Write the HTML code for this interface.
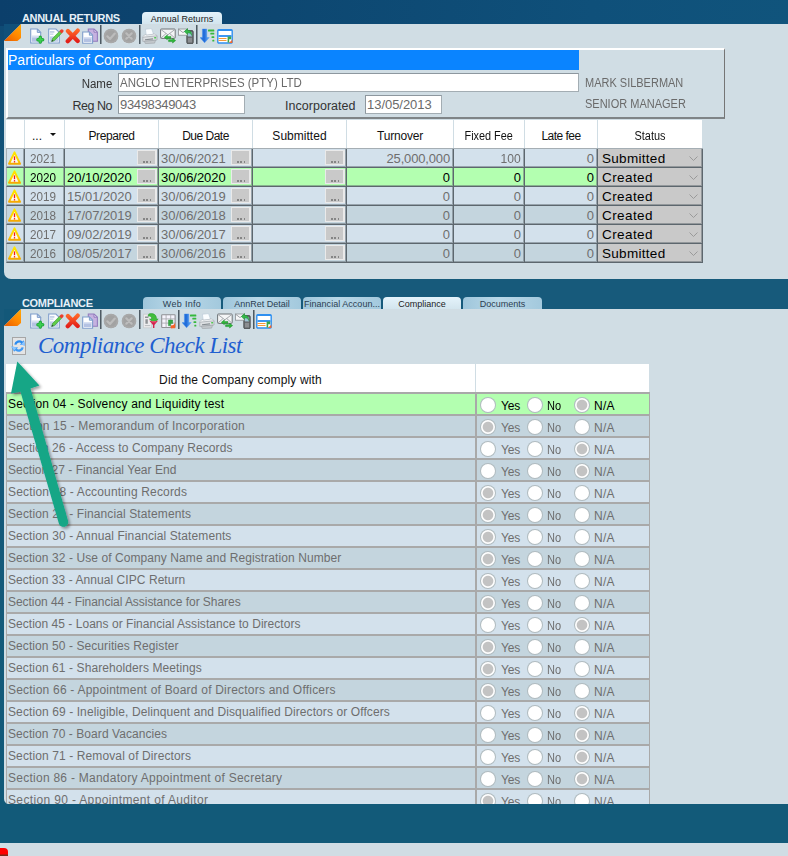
<!DOCTYPE html>
<html><head><meta charset="utf-8"><title>Annual Returns</title>
<style>
*{box-sizing:border-box;margin:0;padding:0}
html,body{width:788px;height:856px;overflow:hidden}
body{position:relative;font-family:"Liberation Sans",sans-serif;font-size:13px;color:#000;
  background:linear-gradient(180deg,#0c426e 0px,#0f4b75 24px,#14567b 200px,#175a7b 280px,#175a7b 310px,#125a79 800px,#115a78 856px)}
#hdr{position:absolute;left:0;top:0;width:788px;height:26px;background:linear-gradient(95deg,#0b3f6b 0%,#0d4771 35%,#0f507a 75%,#10547c 100%)}
.abs{position:absolute}
/* panels */
#p1{position:absolute;left:4px;top:24px;width:784px;height:255px;background:#d0dde4;border-bottom-left-radius:7px}
#p2{position:absolute;left:4px;top:309px;width:784px;height:495px;background:#d0dde4;border-bottom-left-radius:5px;overflow:hidden}
#foot{position:absolute;left:0;top:843px;width:788px;height:13px;background:#d0dde4}
#red{position:absolute;left:0;top:848px;width:8px;height:8px;background:linear-gradient(180deg,#f00 0,#f00 6px,#7a2a1a 7px);border-top-right-radius:4px}
.title{position:absolute;color:#e6f0f8;font-weight:bold;font-size:11px;white-space:nowrap;letter-spacing:-0.2px}
.tab{position:absolute;height:12px;border-radius:4px 4px 0 0;font-size:9px;line-height:14px;text-align:center;color:#2c3e50;white-space:nowrap;overflow:hidden;
  background:linear-gradient(90deg,#9fc6db,#b9d8e8 45%,#b4d4e5 60%,#a3c9dd)}
.tab.act{background:linear-gradient(180deg,#e4f3fb,#d3e5ee);color:#222}
.corner{position:absolute;width:17px;height:17px}
.tb{position:absolute;width:16px;height:16px}
.sep{position:absolute;width:2px;height:19px;background:linear-gradient(90deg,#4d5a63 0 1px,#8b979e 1px)}
/* group box */
#gb{position:absolute;left:6px;top:48px;width:719px;height:71px;border-top:2px solid #fff;border-left:2px solid #fff;border-right:1px solid #757575;border-bottom:2px solid #7f8487;}
#gbt{position:absolute;left:8px;top:50px;width:571px;height:20px;background:#0a84ff;color:#fff;font-size:14px;line-height:20px;padding-left:0;letter-spacing:-.05px;white-space:nowrap}
.lbl{position:absolute;font-size:12.5px;color:#333;white-space:nowrap;text-align:right}
.inp{position:absolute;background:#fff;border:1px solid #8d979e;border-right-color:#a3adb3;border-bottom-color:#a3adb3;font-size:13px;color:#6a6a6a;line-height:17px;padding-left:1px;white-space:nowrap;height:19px}
.who{position:absolute;font-size:12.5px;color:#6a6a6a;white-space:nowrap}
/* grid 1 */
#g1{position:absolute;left:0;top:0;width:788px;height:300px}
.h1{position:absolute;top:120px;height:28px;background:#fff;font-size:12px;line-height:33px;text-align:center;color:#111;white-space:nowrap}
.h1dots{position:absolute;left:32px;top:129px;font-size:12px;color:#111}
.h1arr{position:absolute;left:50px;top:133px;width:0;height:0;border-left:3px solid transparent;border-right:3px solid transparent;border-top:3px solid #111}
.r1{position:absolute;left:6px;width:696px;height:19px;background:#d3e1ec}
.r1.alt{background:#c4d5de}
.r1.sel{background:#b3ffb0}
.r1 .c{position:absolute;top:0;height:19px;border:0 solid #5d676e;border-width:0 1px 1px 0;box-shadow:inset -1px -1px 0 rgba(93,103,110,.5);padding-top:2px;font-size:13px;line-height:16px;color:#6e6e6e;white-space:nowrap;overflow:hidden}
.r1.sel .c{color:#000}
.c8{background:#c9c9c9;color:#000 !important;padding-left:4px;font-size:13.5px !important}
.c0{border-left:1px solid #a5aeb4 !important}
.c1{padding-left:5px}
.c2,.c3{padding-left:2px}
.num{text-align:right;padding-right:3px}
.warn{position:absolute;left:1px;top:2px;width:13px;height:14px}
.dd{position:absolute;right:1px;top:1px;width:20px;height:15px;background:#c9c9c9;border:1px solid #eaeaea;border-width:1px 2px 1px 1px;font-weight:normal;font-size:10px;line-height:12px;text-align:center;color:#777}
.chev{position:absolute;right:4px;top:7px;width:9px;height:5px}
/* grid 2 */
#cl{position:absolute;left:34px;top:22px;font-family:"Liberation Serif",serif;font-style:italic;font-size:23px;color:#1f5fd0;white-space:nowrap;line-height:30px}
#h2a{position:absolute;left:2px;top:55px;width:469px;height:29px;background:#fff;font-size:12px;line-height:32px;text-align:center;color:#111}
#h2b{position:absolute;left:472px;top:55px;width:173px;height:29px;background:#fff}
.r2{position:absolute;left:6px;width:644px;height:23px;background:#d3e1ec}
.r2.alt{background:#c4d5de}
.r2.sel{background:#b3ffb0}
.r2 .q{position:absolute;left:0;top:0;width:470px;height:23px;border:1px solid #a9a9a9;border-width:2px 1px 0 1px;font-size:12px;line-height:21px;padding-left:1px;color:#6e6e6e;white-space:nowrap;overflow:hidden}
.r2 .a{position:absolute;left:470px;top:0;width:174px;height:23px;border:1px solid #a9a9a9;border-width:2px 1px 0 1px;font-size:12px;color:#6e6e6e;white-space:nowrap}
.r2.sel .q,.r2.sel .a{color:#000}
.rd{position:absolute;top:3px;width:16px;height:16px;margin-left:-.5px;border-radius:50%;background:#fff;border:1px solid rgba(70,95,105,.42)}
.rd.on{background:radial-gradient(circle,#c3c3c3 0,#c3c3c3 4.800px,#fff 5.800px)}
.r2 .a > span{position:absolute;top:4px;line-height:16px}
.ly{left:24px}.ln{left:70px}.la{left:117px}

.dd u{position:absolute;left:5px;bottom:1px;width:9px;height:2px;background:linear-gradient(90deg,#858585 0 1.600px,transparent 1.600px 3.300px,#858585 3.300px 4.900px,transparent 4.900px 6.600px,#858585 6.600px 8.200px,transparent 8.200px)}

#g2{position:absolute;left:-4px;top:-309px;width:788px;height:856px}

#g1top{position:absolute;left:6px;top:148px;width:697px;height:1px;background:#a5aeb4}

</style></head>
<body>
<svg width="0" height="0" style="position:absolute"><defs>
<symbol id="i-warn" viewBox="0 0 14 14" preserveAspectRatio="none"><defs><linearGradient id="gw" x1="0" y1="0" x2="0" y2="1"><stop offset="0" stop-color="#ffe600"/><stop offset=".7" stop-color="#ffd000"/><stop offset="1" stop-color="#f5a800"/></linearGradient></defs><path d="M7 1.400L12.900 12.800H1.100Z" fill="#fdfbf0" stroke="url(#gw)" stroke-width="2.100" stroke-linejoin="round"/><rect x="6.300" y="5.400" width="1.400" height="3.800" fill="#f01818"/><rect x="6.300" y="10.100" width="1.400" height="1.400" fill="#f01818"/></symbol>
<symbol id="i-new" viewBox="0 0 16 16"><path d="M.7 1h6.600l3.400 3.400v10.600h-10z" fill="#fdfeff" stroke="#7f9dcb" stroke-width="1.100"/><path d="M7.300 1v3.400h3.400z" fill="#c9d8ef" stroke="#7f9dcb" stroke-linejoin="round"/><rect x="1.900" y="7.800" width="7.600" height="6" fill="#b4c2e3"/><rect x="1.900" y="7.800" width="7.600" height="1.800" fill="#d8e0f2"/><path d="M10.300 9.300v4.800M7.900 11.700h4.800" stroke="#23a83a" stroke-width="3.400" stroke-linecap="round"/><path d="M10.300 9.600v4.200M8.200 11.700h4.200" stroke="#3ccf52" stroke-width="1.800" stroke-linecap="round"/></symbol>
<symbol id="i-edit" viewBox="0 0 16 16"><path d="M.7 1h7.200l3.400 3.400v10.600h-10.600z" fill="#fdfeff" stroke="#7f9dcb" stroke-width="1.100"/><rect x="1.900" y="8.400" width="8.200" height="5.400" fill="#c0cde9"/><rect x="2" y="3.400" width="4.400" height="1.100" fill="#9fb4d8"/><rect x="2" y="5.600" width="3.400" height="1" fill="#b7c7e2"/><path d="M3.600 13.600l.9-3 6.900-7.200 2 2-6.900 7.200z" fill="#62cc48" stroke="#2f9a35" stroke-width=".6"/><path d="M11.300 3.200l1.300-1.400a1.600 1.600 0 0 1 2.400 2.400l-1.300 1.400z" fill="#ea3f2c"/><path d="M3.600 13.600l.6-1.900 1.300 1.300z" fill="#333"/></symbol>
<symbol id="i-del" viewBox="0 0 16 16"><defs><linearGradient id="gx" x1="0" y1="0" x2="0" y2="1"><stop offset="0" stop-color="#ff6426"/><stop offset="1" stop-color="#e3201a"/></linearGradient></defs><path d="M2.900 3l9.800 10M12.700 2.600l-10 10.600" stroke="url(#gx)" stroke-width="4.200" stroke-linecap="round" fill="none"/></symbol>
<symbol id="i-copy" viewBox="0 0 16 16"><path d="M6.300 1h5.700l3.400 3.200v9h-9.100z" fill="#c6b2e0" stroke="#927cbd" stroke-width="1.100"/><path d="M12 1v3.200h3.400z" fill="#e6dcf3" stroke="#927cbd" stroke-linejoin="round"/><path d="M.7 4h6.700l3.200 3.200v8h-9.900z" fill="#fdfeff" stroke="#7f9dcb" stroke-width="1.100"/><path d="M7.400 4v3.200h3.200z" fill="#c9d8ef" stroke="#7f9dcb" stroke-linejoin="round"/><rect x="1.900" y="9" width="7.600" height="5" fill="#b4c2e3"/><rect x="1.900" y="9" width="7.600" height="1.600" fill="#d8e0f2"/></symbol>
<symbol id="i-ok" viewBox="0 0 16 16"><circle cx="8" cy="8" r="7.300" fill="#a2a2a2"/><circle cx="8" cy="8" r="6.300" fill="none" stroke="#adadad" stroke-width="1"/><path d="M4.300 8.300l2.700 2.700 4.800-5.400" fill="none" stroke="#bcbcbc" stroke-width="2.200" stroke-linecap="round" stroke-linejoin="round"/></symbol>
<symbol id="i-no" viewBox="0 0 16 16"><circle cx="8" cy="8" r="7.300" fill="#a2a2a2"/><circle cx="8" cy="8" r="6.300" fill="none" stroke="#adadad" stroke-width="1"/><path d="M5.300 5.300l5.400 5.400M10.700 5.300l-5.400 5.400" fill="none" stroke="#bcbcbc" stroke-width="2.200" stroke-linecap="round"/></symbol>
<symbol id="i-print" viewBox="0 0 16 16"><path d="M3.400 1.200l6.200-.6 2 5.600-7.400 1z" fill="#fafdff" stroke="#bccbd8" stroke-width=".7"/><path d="M.8 8.200l3.200-2 .4 1 7.200-1-.2-.8 3.600 2v1.200l-14.200 1.200z" fill="#f0f2f4" stroke="#b0b6bb" stroke-width=".5"/><path d="M.8 9.200l14.200-1.400v4.200l-14.200 1.400z" fill="#dde0e3" stroke="#a2a8ad" stroke-width=".7" stroke-linejoin="round"/><path d="M2.400 13.300l11.200-1.100-1 2.900-9.200.5z" fill="#c3c8cc" stroke="#9aa0a5" stroke-width=".6"/><path d="M3 11.700l8-.8" stroke="#858c91" stroke-width="1.100"/><rect x="12.200" y="9.200" width="1.900" height="1.200" fill="#30c530"/></symbol>
<symbol id="i-mail" viewBox="0 0 16 16"><rect x=".6" y="1" width="14.600" height="9.400" rx=".8" fill="#f4f5f6" stroke="#6f7478" stroke-width="1"/><path d="M.8 1.400l7.100 5.400 7.100-5.400M.8 10.200l5.200-4.600M15 10.200l-5.200-4.600" fill="none" stroke="#9da2a6" stroke-width=".9"/><path d="M4.300 9.300l3-2.300v1.400h3.600v1.900h-3.600v1.400z" fill="#2fb93a" stroke="#158a22" stroke-width=".5"/><path d="M15.600 12.600l-3-2.300v1.400h-4v1.900h4v1.400z" fill="#2fb93a" stroke="#158a22" stroke-width=".5"/></symbol>
<symbol id="i-sms" viewBox="0 0 16 16"><rect x="8.800" y="2.600" width="6.400" height="13" rx="1.200" fill="#6a6d70" stroke="#3e4144" stroke-width=".8"/><rect x="9.900" y="4.200" width="4.200" height="4.200" fill="#9fc3d8"/><rect x="9.900" y="10" width="4.200" height="4.400" fill="#8b8e91"/><rect x=".5" y="1" width="9" height="6.200" fill="#f6f7f8" stroke="#8a8f93" stroke-width=".8"/><path d="M.6 1.200l4.400 3.400 4.400-3.400" fill="none" stroke="#8a8f93" stroke-width=".8"/><path d="M6.300 3.600l3.200-3v1.700c3 0 4.400 1.800 4.200 5.200-.6-2-1.800-2.700-4.200-2.700v1.800z" fill="#33b94a" stroke="#1c8f31" stroke-width=".5" stroke-linejoin="round"/></symbol>
<symbol id="i-down" viewBox="0 0 16 16"><defs><linearGradient id="gd" x1="0" y1="0" x2="1" y2="0"><stop offset="0" stop-color="#2f7fe6"/><stop offset=".45" stop-color="#1f6ad8"/><stop offset="1" stop-color="#6db6fb"/></linearGradient></defs><path d="M2.400 1h4.400v8.600h2.400l-4.600 5.200-4.600-5.200h2.400z" fill="url(#gd)" stroke="#3b8cf0" stroke-width=".4"/><rect x="8" y="1.600" width="6.300" height="1.900" rx=".5" fill="#36b93c"/><rect x="10.300" y="4.700" width="4" height="1.900" rx=".5" fill="#36b93c"/><rect x="11.500" y="8.200" width="2.800" height="1.900" rx=".5" fill="#36b93c"/><rect x="12.300" y="11.700" width="2" height="1.900" rx=".5" fill="#36b93c"/></symbol>
<symbol id="i-win" viewBox="0 0 16 16"><rect x=".8" y="1.600" width="14.400" height="13.400" rx="1" fill="#fff" stroke="#2f8ff0" stroke-width="1.400"/><rect x="1" y="1.600" width="14" height="1.400" fill="#2f8ff0"/><rect x="1.500" y="7" width="13" height="2" fill="#3e97f2"/><rect x="1.500" y="10" width="8" height="1" fill="#f59a3a"/><rect x="1.500" y="12" width="8" height="1" fill="#f59a3a"/><path d="M10.600 8.400h3.600v2.800h-2v3.200h-1.600z" fill="#3aa64a"/><path d="M12 15l3.400-3.600v3.600z" fill="#f26a30"/></symbol>
<symbol id="i-imp" viewBox="0 0 16 16"><path d="M.4 1.200h6.600l1.600 1.600v12h-8.200z" fill="#ececee" stroke="#c4c6c9" stroke-width=".7"/><path d="M2 3.600h3.400v1.400h-3.400zM2.400 6.200h2.400v4.600h-2.400z" fill="#8f9295"/><path d="M1.800 12.600h5.400" stroke="#b9bbbe" stroke-width="1"/><path d="M5.800 1c4.600-1.400 8 1 7.600 5h1.800l-4.400 4-4.400-4h2.200c.2-2-1-3.200-3.600-2.800z" fill="#41bd3c" stroke="#1f9629" stroke-width=".5" stroke-linejoin="round"/><path d="M6.200 7.400c1.600 1 7.400 1 9 0l-3.800 4.600v3h-1.400v-3z" fill="#d3224c"/><path d="M8.400 8.800h4.800" stroke="#ee6a88" stroke-width=".9"/></symbol>
<symbol id="i-grid" viewBox="0 0 16 16"><rect x=".7" y="1.700" width="13.400" height="12.800" rx=".6" fill="#f6f4fd" stroke="#8f9094" stroke-width="1.100"/><path d="M.7 5.900h13.400M.7 10.100h13.400M5.100 1.700v12.800M9.700 1.700v12.800" stroke="#a3a4aa" stroke-width=".8" fill="none"/><path d="M7.400 7h4.400v3.400h-2.200v2.400h-2.200z" fill="#35a845" stroke="#228a32" stroke-width=".4"/><path d="M9.800 15.200c3 0 4.600-2 4.400-6-.6 2.200-2 3.200-4.400 3.200z" fill="#f46428"/><path d="M10 15.200h4.200v-4z" fill="#f46428"/></symbol>
<symbol id="i-ref" viewBox="0 0 18 20"><rect x="2.500" y="1.500" width="13" height="17" fill="#e3e4e5" stroke="#a6a6a6"/><path d="M4.200 8.400a5 5 0 0 1 8.400-2.800l1.300-1.400 1 5.200-5-.8 1.300-1.400a3 3 0 0 0-4.800 1.600z" fill="#2b8cf0"/><path d="M13.800 11.600a5 5 0 0 1-8.400 2.800l-1.300 1.400-2.800-5.400 6.800 1-1.300 1.400a3 3 0 0 0 4.800-1.600z" fill="#3f9af5"/><path d="M10.900 8.600l4 .7-.8-4.200z" fill="#8cc6ff"/><path d="M1.600 10.600l5.400.8-3 3.200z" fill="#8cc6ff"/></symbol>
</defs></svg>
<div id="hdr"></div><div id="p1"></div>
<div class="title" style="left:22px;top:12px"><span style="letter-spacing:-0.33px">ANNUAL RETURNS</span></div>
<div class="tab act" style="left:142px;top:12px;width:80px"><span style="letter-spacing:0.04px">Annual Returns</span></div>
<svg class="corner" style="left:4px;top:24px" viewBox="0 0 17 17"><defs><linearGradient id="gc1" x1="1" y1="0" x2=".2" y2="1"><stop offset="0" stop-color="#ffaa08"/><stop offset=".55" stop-color="#ff8800"/><stop offset="1" stop-color="#ec6200"/></linearGradient></defs><path d="M0 0H17L0 17Z" fill="#10507a"/><path d="M17 0V14L13.400 17H0Z" fill="url(#gc1)"/></svg>
<div id="gb"></div>
<div id="gbt"><span style="letter-spacing:0.02px">Particulars of Company</span></div>
<div class="lbl" style="left:40px;width:72px;top:77px"><span style="display:inline-block;transform:scaleX(0.92);transform-origin:right center">Name</span></div>
<div class="lbl" style="left:40px;width:72px;top:99px"><span style="letter-spacing:-0.49px">Reg No</span></div>
<div class="inp" style="left:118px;top:73px;width:461px"><span style="display:inline-block;transform:scaleX(0.8843);transform-origin:left center">ANGLO ENTERPRISES (PTY) LTD</span></div>
<div class="inp" style="left:118px;top:95px;width:127px"><span style="letter-spacing:-0.34px">93498349043</span></div>
<div class="lbl" style="left:270px;width:85.500px;top:99px"><span style="letter-spacing:0.02px">Incorporated</span></div>
<div class="inp" style="left:365px;top:95px;width:77px"><span style="letter-spacing:-0.04px">13/05/2013</span></div>
<div class="who" style="left:585px;top:76px"><span style="display:inline-block;transform:scaleX(0.8791);transform-origin:left center">MARK SILBERMAN</span></div>
<div class="who" style="left:585px;top:97px"><span style="display:inline-block;transform:scaleX(0.8798);transform-origin:left center">SENIOR MANAGER</span></div>
<div id="g1">
<div class="h1" style="left:6px;width:18px"></div>
<div class="h1" style="left:25px;width:39px"></div>
<div class="h1" style="left:65px;width:93px"><span style="letter-spacing:-0.43px">Prepared</span></div>
<div class="h1" style="left:159px;width:93px"><span style="letter-spacing:-0.5px">Due Date</span></div>
<div class="h1" style="left:253px;width:93px"><span style="letter-spacing:0.03px">Submitted</span></div>
<div class="h1" style="left:347px;width:106px"><span style="letter-spacing:-0.2px">Turnover</span></div>
<div class="h1" style="left:454px;width:70px"><span style="display:inline-block;transform:scaleX(0.9072);transform-origin:center center">Fixed Fee</span></div>
<div class="h1" style="left:525px;width:72px"><span style="letter-spacing:-0.54px">Late fee</span></div>
<div class="h1" style="left:598px;width:104px"><span style="display:inline-block;transform:scaleX(0.9112);transform-origin:center center">Status</span></div>
<div class="h1dots">...</div><div class="h1arr"></div><div id="g1top"></div>
<div class="r1" style="top:149px"><div class="c c0" style="left:0px;width:19px"><svg class="warn" viewBox="0 0 14 14" preserveAspectRatio="none"><use href="#i-warn"/></svg></div><div class="c c1" style="left:19px;width:40px"><span style="display:inline-block;transform:scaleX(0.8993);transform-origin:left center">2021</span></div><div class="c c2" style="left:59px;width:94px"><span style="letter-spacing:-0.04px"></span><b class="dd"><u></u></b></div><div class="c c3" style="left:153px;width:94px"><span style="letter-spacing:-0.04px">30/06/2021</span><b class="dd"><u></u></b></div><div class="c c4" style="left:247px;width:94px"><b class="dd"><u></u></b></div><div class="c c5 num" style="left:341px;width:107px"><span style="letter-spacing:-0.16px">25,000,000</span></div><div class="c c6 num" style="left:448px;width:71px"><span style="display:inline-block;transform:scaleX(0.932);transform-origin:right center">100</span></div><div class="c c7 num" style="left:519px;width:73px">0</div><div class="c c8" style="left:592px;width:105px"><span style="letter-spacing:0.3px">Submitted</span><svg class="chev" viewBox="0 0 9 5"><path d="M.5 .5l4 4 4-4" fill="none" stroke="#9a9a9a" stroke-width="1"/></svg></div></div>
<div class="r1 sel" style="top:168px"><div class="c c0" style="left:0px;width:19px"><svg class="warn" viewBox="0 0 14 14" preserveAspectRatio="none"><use href="#i-warn"/></svg></div><div class="c c1" style="left:19px;width:40px"><span style="display:inline-block;transform:scaleX(0.8993);transform-origin:left center">2020</span></div><div class="c c2" style="left:59px;width:94px"><span style="letter-spacing:-0.04px">20/10/2020</span><b class="dd"><u></u></b></div><div class="c c3" style="left:153px;width:94px"><span style="letter-spacing:-0.04px">30/06/2020</span><b class="dd"><u></u></b></div><div class="c c4" style="left:247px;width:94px"><b class="dd"><u></u></b></div><div class="c c5 num" style="left:341px;width:107px">0</div><div class="c c6 num" style="left:448px;width:71px">0</div><div class="c c7 num" style="left:519px;width:73px">0</div><div class="c c8" style="left:592px;width:105px"><span style="letter-spacing:0.41px">Created</span><svg class="chev" viewBox="0 0 9 5"><path d="M.5 .5l4 4 4-4" fill="none" stroke="#9a9a9a" stroke-width="1"/></svg></div></div>
<div class="r1" style="top:187px"><div class="c c0" style="left:0px;width:19px"><svg class="warn" viewBox="0 0 14 14" preserveAspectRatio="none"><use href="#i-warn"/></svg></div><div class="c c1" style="left:19px;width:40px"><span style="display:inline-block;transform:scaleX(0.8993);transform-origin:left center">2019</span></div><div class="c c2" style="left:59px;width:94px"><span style="letter-spacing:-0.04px">15/01/2020</span><b class="dd"><u></u></b></div><div class="c c3" style="left:153px;width:94px"><span style="letter-spacing:-0.04px">30/06/2019</span><b class="dd"><u></u></b></div><div class="c c4" style="left:247px;width:94px"><b class="dd"><u></u></b></div><div class="c c5 num" style="left:341px;width:107px">0</div><div class="c c6 num" style="left:448px;width:71px">0</div><div class="c c7 num" style="left:519px;width:73px">0</div><div class="c c8" style="left:592px;width:105px"><span style="letter-spacing:0.41px">Created</span><svg class="chev" viewBox="0 0 9 5"><path d="M.5 .5l4 4 4-4" fill="none" stroke="#9a9a9a" stroke-width="1"/></svg></div></div>
<div class="r1 alt" style="top:206px"><div class="c c0" style="left:0px;width:19px"><svg class="warn" viewBox="0 0 14 14" preserveAspectRatio="none"><use href="#i-warn"/></svg></div><div class="c c1" style="left:19px;width:40px"><span style="display:inline-block;transform:scaleX(0.8993);transform-origin:left center">2018</span></div><div class="c c2" style="left:59px;width:94px"><span style="letter-spacing:-0.04px">17/07/2019</span><b class="dd"><u></u></b></div><div class="c c3" style="left:153px;width:94px"><span style="letter-spacing:-0.04px">30/06/2018</span><b class="dd"><u></u></b></div><div class="c c4" style="left:247px;width:94px"><b class="dd"><u></u></b></div><div class="c c5 num" style="left:341px;width:107px">0</div><div class="c c6 num" style="left:448px;width:71px">0</div><div class="c c7 num" style="left:519px;width:73px">0</div><div class="c c8" style="left:592px;width:105px"><span style="letter-spacing:0.41px">Created</span><svg class="chev" viewBox="0 0 9 5"><path d="M.5 .5l4 4 4-4" fill="none" stroke="#9a9a9a" stroke-width="1"/></svg></div></div>
<div class="r1" style="top:225px"><div class="c c0" style="left:0px;width:19px"><svg class="warn" viewBox="0 0 14 14" preserveAspectRatio="none"><use href="#i-warn"/></svg></div><div class="c c1" style="left:19px;width:40px"><span style="display:inline-block;transform:scaleX(0.8993);transform-origin:left center">2017</span></div><div class="c c2" style="left:59px;width:94px"><span style="letter-spacing:-0.04px">09/02/2019</span><b class="dd"><u></u></b></div><div class="c c3" style="left:153px;width:94px"><span style="letter-spacing:-0.04px">30/06/2017</span><b class="dd"><u></u></b></div><div class="c c4" style="left:247px;width:94px"><b class="dd"><u></u></b></div><div class="c c5 num" style="left:341px;width:107px">0</div><div class="c c6 num" style="left:448px;width:71px">0</div><div class="c c7 num" style="left:519px;width:73px">0</div><div class="c c8" style="left:592px;width:105px"><span style="letter-spacing:0.41px">Created</span><svg class="chev" viewBox="0 0 9 5"><path d="M.5 .5l4 4 4-4" fill="none" stroke="#9a9a9a" stroke-width="1"/></svg></div></div>
<div class="r1 alt" style="top:244px"><div class="c c0" style="left:0px;width:19px"><svg class="warn" viewBox="0 0 14 14" preserveAspectRatio="none"><use href="#i-warn"/></svg></div><div class="c c1" style="left:19px;width:40px"><span style="display:inline-block;transform:scaleX(0.8993);transform-origin:left center">2016</span></div><div class="c c2" style="left:59px;width:94px"><span style="letter-spacing:-0.04px">08/05/2017</span><b class="dd"><u></u></b></div><div class="c c3" style="left:153px;width:94px"><span style="letter-spacing:-0.04px">30/06/2016</span><b class="dd"><u></u></b></div><div class="c c4" style="left:247px;width:94px"><b class="dd"><u></u></b></div><div class="c c5 num" style="left:341px;width:107px">0</div><div class="c c6 num" style="left:448px;width:71px">0</div><div class="c c7 num" style="left:519px;width:73px">0</div><div class="c c8" style="left:592px;width:105px"><span style="letter-spacing:0.3px">Submitted</span><svg class="chev" viewBox="0 0 9 5"><path d="M.5 .5l4 4 4-4" fill="none" stroke="#9a9a9a" stroke-width="1"/></svg></div></div>
</div>
<div id="p2">
 <div id="cl"><span style="letter-spacing:-0.51px">Compliance Check List</span></div>
 <div id="h2a"><span style="letter-spacing:0.15px">Did the Company comply with</span></div><div id="h2b"></div>
<div id="g2">
<div class="r2 sel" style="top:392px"><div class="q"><span style="letter-spacing:0.17px">Section 04 - Solvency and Liquidity test</span></div><div class="a"><i class="rd" style="left:3px"></i><span class="ly"><span style="letter-spacing:-0.14px">Yes</span></span><i class="rd" style="left:50px"></i><span class="ln"><span style="display:inline-block;transform:scaleX(0.919);transform-origin:left center">No</span></span><i class="rd on" style="left:97px"></i><span class="la"><span style="letter-spacing:0.25px">N/A</span></span></div></div>
<div class="r2 alt" style="top:414px"><div class="q"><span style="letter-spacing:0.22px">Section 15 - Memorandum of Incorporation</span></div><div class="a"><i class="rd on" style="left:3px"></i><span class="ly"><span style="letter-spacing:-0.14px">Yes</span></span><i class="rd" style="left:50px"></i><span class="ln"><span style="display:inline-block;transform:scaleX(0.919);transform-origin:left center">No</span></span><i class="rd" style="left:97px"></i><span class="la"><span style="letter-spacing:0.25px">N/A</span></span></div></div>
<div class="r2" style="top:436px"><div class="q"><span style="letter-spacing:0.08px">Section 26 - Access to Company Records</span></div><div class="a"><i class="rd" style="left:3px"></i><span class="ly"><span style="letter-spacing:-0.14px">Yes</span></span><i class="rd" style="left:50px"></i><span class="ln"><span style="display:inline-block;transform:scaleX(0.919);transform-origin:left center">No</span></span><i class="rd on" style="left:97px"></i><span class="la"><span style="letter-spacing:0.25px">N/A</span></span></div></div>
<div class="r2 alt" style="top:458px"><div class="q"><span style="letter-spacing:0.03px">Section 27 - Financial Year End</span></div><div class="a"><i class="rd" style="left:3px"></i><span class="ly"><span style="letter-spacing:-0.14px">Yes</span></span><i class="rd" style="left:50px"></i><span class="ln"><span style="display:inline-block;transform:scaleX(0.919);transform-origin:left center">No</span></span><i class="rd on" style="left:97px"></i><span class="la"><span style="letter-spacing:0.25px">N/A</span></span></div></div>
<div class="r2" style="top:480px"><div class="q"><span style="letter-spacing:0.16px">Section 28 - Accounting Records</span></div><div class="a"><i class="rd on" style="left:3px"></i><span class="ly"><span style="letter-spacing:-0.14px">Yes</span></span><i class="rd" style="left:50px"></i><span class="ln"><span style="display:inline-block;transform:scaleX(0.919);transform-origin:left center">No</span></span><i class="rd" style="left:97px"></i><span class="la"><span style="letter-spacing:0.25px">N/A</span></span></div></div>
<div class="r2 alt" style="top:502px"><div class="q"><span style="letter-spacing:0.11px">Section 29 - Financial Statements</span></div><div class="a"><i class="rd on" style="left:3px"></i><span class="ly"><span style="letter-spacing:-0.14px">Yes</span></span><i class="rd" style="left:50px"></i><span class="ln"><span style="display:inline-block;transform:scaleX(0.919);transform-origin:left center">No</span></span><i class="rd" style="left:97px"></i><span class="la"><span style="letter-spacing:0.25px">N/A</span></span></div></div>
<div class="r2" style="top:524px"><div class="q"><span style="letter-spacing:0.1px">Section 30 - Annual Financial Statements</span></div><div class="a"><i class="rd on" style="left:3px"></i><span class="ly"><span style="letter-spacing:-0.14px">Yes</span></span><i class="rd" style="left:50px"></i><span class="ln"><span style="display:inline-block;transform:scaleX(0.919);transform-origin:left center">No</span></span><i class="rd" style="left:97px"></i><span class="la"><span style="letter-spacing:0.25px">N/A</span></span></div></div>
<div class="r2 alt" style="top:546px"><div class="q"><span style="letter-spacing:0.08px">Section 32 - Use of Company Name and Registration Number</span></div><div class="a"><i class="rd on" style="left:3px"></i><span class="ly"><span style="letter-spacing:-0.14px">Yes</span></span><i class="rd" style="left:50px"></i><span class="ln"><span style="display:inline-block;transform:scaleX(0.919);transform-origin:left center">No</span></span><i class="rd" style="left:97px"></i><span class="la"><span style="letter-spacing:0.25px">N/A</span></span></div></div>
<div class="r2" style="top:568px"><div class="q"><span style="letter-spacing:0.06px">Section 33 - Annual CIPC Return</span></div><div class="a"><i class="rd on" style="left:3px"></i><span class="ly"><span style="letter-spacing:-0.14px">Yes</span></span><i class="rd" style="left:50px"></i><span class="ln"><span style="display:inline-block;transform:scaleX(0.919);transform-origin:left center">No</span></span><i class="rd" style="left:97px"></i><span class="la"><span style="letter-spacing:0.25px">N/A</span></span></div></div>
<div class="r2 alt" style="top:590px"><div class="q"><span style="letter-spacing:-0.05px">Section 44 - Financial Assistance for Shares</span></div><div class="a"><i class="rd on" style="left:3px"></i><span class="ly"><span style="letter-spacing:-0.14px">Yes</span></span><i class="rd" style="left:50px"></i><span class="ln"><span style="display:inline-block;transform:scaleX(0.919);transform-origin:left center">No</span></span><i class="rd" style="left:97px"></i><span class="la"><span style="letter-spacing:0.25px">N/A</span></span></div></div>
<div class="r2" style="top:612px"><div class="q"><span style="letter-spacing:0.03px">Section 45 - Loans or Financial Assistance to Directors</span></div><div class="a"><i class="rd" style="left:3px"></i><span class="ly"><span style="letter-spacing:-0.14px">Yes</span></span><i class="rd" style="left:50px"></i><span class="ln"><span style="display:inline-block;transform:scaleX(0.919);transform-origin:left center">No</span></span><i class="rd on" style="left:97px"></i><span class="la"><span style="letter-spacing:0.25px">N/A</span></span></div></div>
<div class="r2 alt" style="top:634px"><div class="q"><span style="letter-spacing:0.08px">Section 50 - Securities Register</span></div><div class="a"><i class="rd on" style="left:3px"></i><span class="ly"><span style="letter-spacing:-0.14px">Yes</span></span><i class="rd" style="left:50px"></i><span class="ln"><span style="display:inline-block;transform:scaleX(0.919);transform-origin:left center">No</span></span><i class="rd" style="left:97px"></i><span class="la"><span style="letter-spacing:0.25px">N/A</span></span></div></div>
<div class="r2" style="top:656px"><div class="q"><span style="letter-spacing:0.09px">Section 61 - Shareholders Meetings</span></div><div class="a"><i class="rd on" style="left:3px"></i><span class="ly"><span style="letter-spacing:-0.14px">Yes</span></span><i class="rd" style="left:50px"></i><span class="ln"><span style="display:inline-block;transform:scaleX(0.919);transform-origin:left center">No</span></span><i class="rd" style="left:97px"></i><span class="la"><span style="letter-spacing:0.25px">N/A</span></span></div></div>
<div class="r2 alt" style="top:678px"><div class="q"><span style="letter-spacing:0.21px">Section 66 - Appointment of Board of Directors and Officers</span></div><div class="a"><i class="rd on" style="left:3px"></i><span class="ly"><span style="letter-spacing:-0.14px">Yes</span></span><i class="rd" style="left:50px"></i><span class="ln"><span style="display:inline-block;transform:scaleX(0.919);transform-origin:left center">No</span></span><i class="rd" style="left:97px"></i><span class="la"><span style="letter-spacing:0.25px">N/A</span></span></div></div>
<div class="r2" style="top:700px"><div class="q"><span style="letter-spacing:0.1px">Section 69 - Ineligible, Delinquent and Disqualified Directors or Offcers</span></div><div class="a"><i class="rd" style="left:3px"></i><span class="ly"><span style="letter-spacing:-0.14px">Yes</span></span><i class="rd" style="left:50px"></i><span class="ln"><span style="display:inline-block;transform:scaleX(0.919);transform-origin:left center">No</span></span><i class="rd on" style="left:97px"></i><span class="la"><span style="letter-spacing:0.25px">N/A</span></span></div></div>
<div class="r2 alt" style="top:722px"><div class="q"><span style="letter-spacing:0.07px">Section 70 - Board Vacancies</span></div><div class="a"><i class="rd" style="left:3px"></i><span class="ly"><span style="letter-spacing:-0.14px">Yes</span></span><i class="rd" style="left:50px"></i><span class="ln"><span style="display:inline-block;transform:scaleX(0.919);transform-origin:left center">No</span></span><i class="rd on" style="left:97px"></i><span class="la"><span style="letter-spacing:0.25px">N/A</span></span></div></div>
<div class="r2" style="top:744px"><div class="q"><span style="letter-spacing:0.11px">Section 71 - Removal of Directors</span></div><div class="a"><i class="rd" style="left:3px"></i><span class="ly"><span style="letter-spacing:-0.14px">Yes</span></span><i class="rd" style="left:50px"></i><span class="ln"><span style="display:inline-block;transform:scaleX(0.919);transform-origin:left center">No</span></span><i class="rd on" style="left:97px"></i><span class="la"><span style="letter-spacing:0.25px">N/A</span></span></div></div>
<div class="r2 alt" style="top:766px"><div class="q"><span style="letter-spacing:0.26px">Section 86 - Mandatory Appointment of Secretary</span></div><div class="a"><i class="rd" style="left:3px"></i><span class="ly"><span style="letter-spacing:-0.14px">Yes</span></span><i class="rd" style="left:50px"></i><span class="ln"><span style="display:inline-block;transform:scaleX(0.919);transform-origin:left center">No</span></span><i class="rd on" style="left:97px"></i><span class="la"><span style="letter-spacing:0.25px">N/A</span></span></div></div>
<div class="r2" style="top:788px"><div class="q"><span style="letter-spacing:0.35px">Section 90 - Appointment of Auditor</span></div><div class="a"><i class="rd on" style="left:3px"></i><span class="ly"><span style="letter-spacing:-0.14px">Yes</span></span><i class="rd" style="left:50px"></i><span class="ln"><span style="display:inline-block;transform:scaleX(0.919);transform-origin:left center">No</span></span><i class="rd" style="left:97px"></i><span class="la"><span style="letter-spacing:0.25px">N/A</span></span></div></div>
</div>
</div>
<div class="title" style="left:22px;top:297px"><span style="letter-spacing:-0.33px">COMPLIANCE</span></div>
<div class="tab" style="left:143px;top:297px;width:78px"><span style="letter-spacing:0.31px">Web Info</span></div>
<div class="tab" style="left:223px;top:297px;width:78px">AnnRet Detail</div>
<div class="tab" style="left:303px;top:297px;width:78px"><span style="letter-spacing:0.03px">Financial Accoun...</span></div>
<div class="tab act" style="left:383px;top:297px;width:78px">Compliance</div>
<div class="tab" style="left:463px;top:297px;width:79px">Documents</div>
<svg class="corner" style="left:4px;top:309px" viewBox="0 0 17 17"><defs><linearGradient id="gc2" x1="1" y1="0" x2=".2" y2="1"><stop offset="0" stop-color="#ffaa08"/><stop offset=".55" stop-color="#ff8800"/><stop offset="1" stop-color="#ec6200"/></linearGradient></defs><path d="M0 0H17L0 17Z" fill="#135879"/><path d="M17 0V14L13.400 17H0Z" fill="url(#gc2)"/></svg>
<svg class="tb" style="left:30px;top:28px" viewBox="0 0 16 16"><use href="#i-new"/></svg>
<svg class="tb" style="left:48px;top:28px" viewBox="0 0 16 16"><use href="#i-edit"/></svg>
<svg class="tb" style="left:65px;top:28px" viewBox="0 0 16 16"><use href="#i-del"/></svg>
<svg class="tb" style="left:82px;top:28px" viewBox="0 0 16 16"><use href="#i-copy"/></svg>
<div class="sep" style="left:100px;top:25px"></div>
<svg class="tb" style="left:103px;top:28px" viewBox="0 0 16 16"><use href="#i-ok"/></svg>
<svg class="tb" style="left:121px;top:28px" viewBox="0 0 16 16"><use href="#i-no"/></svg>
<div class="sep" style="left:139px;top:25px"></div>
<svg class="tb" style="left:142px;top:28px" viewBox="0 0 16 16"><use href="#i-print"/></svg>
<svg class="tb" style="left:160px;top:28px" viewBox="0 0 16 16"><use href="#i-mail"/></svg>
<svg class="tb" style="left:178px;top:28px" viewBox="0 0 16 16"><use href="#i-sms"/></svg>
<div class="sep" style="left:196px;top:25px"></div>
<svg class="tb" style="left:200px;top:28px" viewBox="0 0 16 16"><use href="#i-down"/></svg>
<svg class="tb" style="left:217px;top:28px" viewBox="0 0 16 16"><use href="#i-win"/></svg>
<svg class="tb" style="left:30px;top:313px" viewBox="0 0 16 16"><use href="#i-new"/></svg>
<svg class="tb" style="left:48px;top:313px" viewBox="0 0 16 16"><use href="#i-edit"/></svg>
<svg class="tb" style="left:65px;top:313px" viewBox="0 0 16 16"><use href="#i-del"/></svg>
<svg class="tb" style="left:82px;top:313px" viewBox="0 0 16 16"><use href="#i-copy"/></svg>
<div class="sep" style="left:100px;top:310px"></div>
<svg class="tb" style="left:103px;top:313px" viewBox="0 0 16 16"><use href="#i-ok"/></svg>
<svg class="tb" style="left:121px;top:313px" viewBox="0 0 16 16"><use href="#i-no"/></svg>
<div class="sep" style="left:139px;top:310px"></div>
<svg class="tb" style="left:143px;top:313px" viewBox="0 0 16 16"><use href="#i-imp"/></svg>
<svg class="tb" style="left:161px;top:313px" viewBox="0 0 16 16"><use href="#i-grid"/></svg>
<div class="sep" style="left:178px;top:310px"></div>
<svg class="tb" style="left:182px;top:313px" viewBox="0 0 16 16"><use href="#i-down"/></svg>
<svg class="tb" style="left:199px;top:313px" viewBox="0 0 16 16"><use href="#i-print"/></svg>
<svg class="tb" style="left:217px;top:313px" viewBox="0 0 16 16"><use href="#i-mail"/></svg>
<svg class="tb" style="left:235px;top:313px" viewBox="0 0 16 16"><use href="#i-sms"/></svg>
<div class="sep" style="left:253px;top:310px"></div>
<svg class="tb" style="left:256px;top:313px" viewBox="0 0 16 16"><use href="#i-win"/></svg>
<svg class="tb" style="left:10px;top:336px;width:18px;height:20px" viewBox="0 0 18 20"><use href="#i-ref"/></svg>
<div id="band3" style="position:absolute;left:0;top:804px;width:788px;height:39px;background:#125a79"></div>
<div id="foot"></div><div id="red"></div>
<svg style="position:absolute;left:0;top:350px" width="100" height="190" viewBox="0 350 100 190">
 <defs><filter id="ash" x="-30%" y="-10%" width="170%" height="125%"><feGaussianBlur in="SourceAlpha" stdDeviation="1.600"/><feOffset dx="1.500" dy="1.500"/><feComponentTransfer><feFuncA type="linear" slope=".38"/></feComponentTransfer><feMerge><feMergeNode/><feMergeNode in="SourceGraphic"/></feMerge></filter></defs>
 <path filter="url(#ash)" fill="#13a686" d="M17.300 361.500 L39.400 385.500 L30.500 388.400 L68 520.800 A4.700 4.700 0 0 1 58.900 523.400 L20.500 391.800 L11 393.400 Z"/>
</svg>
</body></html>
